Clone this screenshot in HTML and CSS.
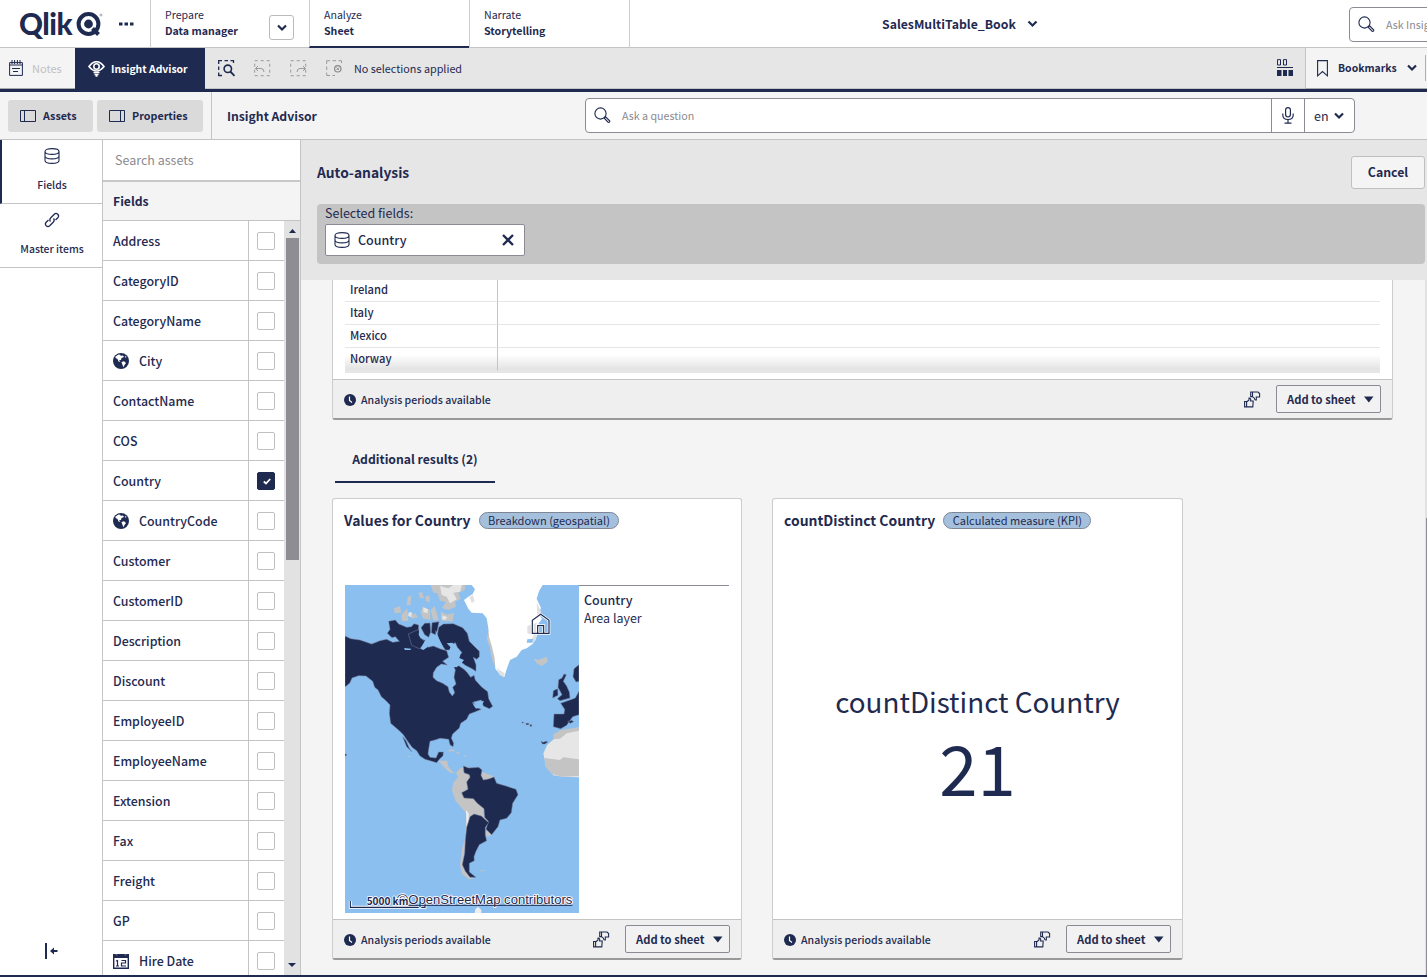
FILE: index.html
```html
<!DOCTYPE html>
<html lang="en">
<head>
<meta charset="utf-8">
<title>SalesMultiTable_Book - Insight Advisor</title>
<link rel="stylesheet" href="styles.css">
</head>
<body>
<svg class="defs" width="0" height="0">
  <symbol id="chev" viewBox="0 0 10 8"><path d="M1 1.5L5 5.5L9 1.5" fill="none" stroke="currentColor" stroke-width="2.2"/></symbol>
  <symbol id="search" viewBox="0 0 18 18"><circle cx="6.500" cy="6.500" r="5.600" fill="none" stroke="currentColor" stroke-width="1.1"/><path d="M10.200 11.200L11.600 9.800L15.800 14Q15.800 15.600 14.300 15.500Z" fill="none" stroke="currentColor" stroke-width="1.1"/></symbol>
  <symbol id="db" viewBox="0 0 16 16"><path d="M1 3.500V12.500C1 16.300 15 16.300 15 12.500V3.500M1 3.500C1 -.3 15 -.3 15 3.500S1 7.300 1 3.500M1 8C1 11.800 15 11.800 15 8" fill="none" stroke="currentColor" stroke-width="1.1"/></symbol>
  <symbol id="globe" viewBox="0 0 16 16"><circle cx="8" cy="8" r="8" fill="#1f2a50"/><path d="M2.500 3.500L5.500 1.500L8 2L7 3L10 2.500L11 4L8.500 5L8 7L6 7.200L7.500 9L5.500 8.500L4.500 6L2.500 5Z" fill="#fff"/><path d="M8.500 9L11 8.300L13 10L11.500 12L10.500 14.200L9.500 12Z" fill="#fff"/><path d="M12 2.500L13.500 4L12.500 5Z" fill="#fff"/></symbol>
  <symbol id="clock" viewBox="0 0 12 12"><circle cx="6" cy="6" r="6" fill="#1f2a50"/><path d="M5.500 2.500V6.500L8 8.500" fill="none" stroke="#fff" stroke-width="1.200"/></symbol>
  <symbol id="thumbs" viewBox="0 0 17 17"><g fill="none" stroke="currentColor" stroke-width="1.100"><path d="M.6 10.500H2.600V15.900H.6ZM2.600 11L5 9V7Q7.200 6.800 6.600 10H9.200L8.800 15.900H2.600"/><path d="M6.700 1H8.500V5.600H6.700ZM8.500 1H14L15.600 2.500V6H12.300V9Q10.600 9.200 10.400 7.200L8.500 5.600"/></g></symbol>
  <symbol id="down" viewBox="0 0 10 7"><path d="M0 .5H9.500L4.800 6.500Z" fill="currentColor"/></symbol>
</svg>
<div class="app">
  <header class="top">
    <div class="brand">
      <span class="brand-name">Qlik</span>
      <svg class="brand-mark" width="27" height="26" viewBox="0 0 27 26"><circle cx="12.500" cy="12" r="9.900" fill="none" stroke="#1f2a50" stroke-width="4"/><circle cx="12.500" cy="12" r="4.400" fill="#1f2a50"/><path d="M16.500 16.500L22.500 22.500" stroke="#1f2a50" stroke-width="4"/><circle cx="25" cy="3" r="1" fill="none" stroke="#777" stroke-width=".6"/></svg>
      <svg class="dots" width="15" height="4" viewBox="0 0 15 4"><path d="M0 .5h3.500v3H0ZM5.500 .5H9v3H5.500ZM11 .5h3.500v3H11Z" fill="#1f2a50"/></svg>
    </div>
    <div class="tab prepare"><div><span>Prepare</span><b>Data manager</b></div><button class="drop"><svg width="10" height="8"><use href="#chev"/></svg></button></div>
    <div class="tab active"><div><span>Analyze</span><b>Sheet</b></div></div>
    <div class="tab"><div><span>Narrate</span><b>Storytelling</b></div></div>
    <div class="book"><span>SalesMultiTable_Book</span><svg width="11" height="8"><use href="#chev"/></svg></div>
    <div class="ask"><svg width="18" height="18"><use href="#search"/></svg><span>Ask Insight Advisor</span></div>
  </header>

  <div class="selbar">
    <div class="notes"><svg width="15" height="17" viewBox="0 0 15 17"><path d="M.6 2.600H13.400V15.400H.6ZM.6 5H13.400M3 0V4M5.600 0V4M8.400 0V4M11 0V4M3 8.500H11M4 11.500H9" fill="none" stroke="#1f2a50"/></svg><span>Notes</span></div>
    <div class="advisor"><svg width="17" height="16" viewBox="0 0 17 16"><path d="M1 5.500Q8.500 -4 16 5.500Q12.500 10 8.500 10T1 5.500Z" fill="none" stroke="#fff" stroke-width="1.700"/><circle cx="8.500" cy="5.500" r="2.700" fill="none" stroke="#fff" stroke-width="1.600"/><path d="M5.500 11.500H11.500M6.500 13.500H10.500M7.500 15H9.500" stroke="#fff" stroke-width="1.300"/></svg><span>Insight Advisor</span></div>
    <div class="tools">
      <svg width="18" height="17" viewBox="0 0 18 17"><path d="M.7 4V.7H4M6.500 .7H10M12.500 .7H15.500V3M.7 6.500V10M.7 12.500V15.500H4" fill="none" stroke="#1f2a50" stroke-width="1.300"/><circle cx="9.800" cy="8.800" r="3.700" fill="none" stroke="#1f2a50" stroke-width="1.600"/><path d="M12.300 11.500L16.500 15.800" stroke="#1f2a50" stroke-width="1.800"/></svg>
      <svg width="18" height="17" viewBox="0 0 18 17"><rect x=".7" y=".7" width="15" height="15" fill="none" stroke="#999" stroke-dasharray="3 3"/><path d="M4 6L1.500 8.500L4 11M1.500 8.500H7Q10 8.500 10 12" fill="none" stroke="#999"/></svg>
      <svg width="18" height="17" viewBox="0 0 18 17"><rect x=".7" y=".7" width="15" height="15" fill="none" stroke="#999" stroke-dasharray="3 3"/><path d="M13 6L15.500 8.500L13 11M15.500 8.500H10Q7 8.500 7 12" fill="none" stroke="#999"/></svg>
      <svg width="18" height="17" viewBox="0 0 18 17"><path d="M.7 4V.7H4M6.500 .7H10M12.500 .7H15.500V3M.7 6.500V10M.7 12.500V15.500H4M6.500 15.500H9" fill="none" stroke="#999"/><circle cx="11.800" cy="8.800" r="3.200" fill="none" stroke="#888" stroke-width="1.200"/><path d="M10.500 7.500L13 10M13 7.500L10.500 10" stroke="#888"/></svg>
    </div>
    <span class="nosel">No selections applied</span>
    <svg class="seltool" width="16" height="17" viewBox="0 0 16 17"><path d="M.5 .6H3.500V6H.5ZM6.500 .6H9.500V6H6.500Z" fill="none" stroke="#1f2a50" stroke-width="1"/><path d="M0 8.500H16" stroke="#1f2a50" stroke-width="1"/><path d="M0 11H4.500V17H0ZM6 11H10V17H6ZM11.500 11H16V17H11.500Z" fill="#1f2a50"/></svg>
    <div class="bookmarks"><svg width="11" height="17" viewBox="0 0 11 17"><path d="M.6 .6H10.400V15.800L5.500 11.500L.6 15.800Z" fill="none" stroke="#1f2a50" stroke-width="1.100"/></svg><span>Bookmarks</span><svg width="10" height="8"><use href="#chev"/></svg><i></i></div>
  </div>

  <div class="subbar">
    <div class="toggles">
      <button class="toggle assets"><svg width="17" height="12" viewBox="0 0 17 12"><path d="M.5 .5H15.500V11.500H.5ZM4.500 .5V11.500" fill="none" stroke="#1f2a50"/></svg>Assets</button>
      <button class="toggle props"><svg width="17" height="12" viewBox="0 0 17 12"><path d="M.5 .5H15.500V11.500H.5ZM11.500 .5V11.500" fill="none" stroke="#1f2a50"/></svg>Properties</button>
    </div>
    <h1>Insight Advisor</h1>
    <div class="question">
      <svg width="18" height="18"><use href="#search"/></svg><span>Ask a question</span>
      <div class="mic"><svg width="12" height="17" viewBox="0 0 12 17"><rect x="3.600" y=".6" width="4.800" height="9.400" rx="2.400" fill="none" stroke="#1f2a50" stroke-width="1.200"/><path d="M.8 6.500V8Q.8 12.500 6 12.500T11.200 8V6.500M6 12.500V16M2.500 16.200H9.500" fill="none" stroke="#1f2a50" stroke-width="1.200"/></svg></div>
      <div class="lang">en<svg width="10" height="8"><use href="#chev"/></svg></div>
    </div>
  </div>

  <div class="body">
    <nav class="rail">
      <div class="rail-item on"><svg width="16" height="16"><use href="#db"/></svg><span>Fields</span></div>
      <div class="rail-item"><svg width="16" height="16" viewBox="0 0 16 16"><g fill="none" stroke="#1f2a50" stroke-width="1.300"><path d="M6.500 9.500Q5 7.500 6.800 5.800L10.300 2.200Q12 .6 13.800 2.200Q15.400 4 13.800 5.700L11.500 8"/><path d="M9.500 6.500Q11 8.500 9.200 10.200L5.700 13.800Q4 15.400 2.200 13.800Q.6 12 2.200 10.300L4.500 8"/></g></svg><span>Master items</span></div>
      <svg class="collapse" width="13" height="16" viewBox="0 0 13 16"><path d="M1 0V16" stroke="#1f2a50" stroke-width="2"/><path d="M5 8L9 4.500V7H12.500V9H9V11.500Z" fill="#1f2a50"/></svg>
    </nav>
    <aside class="panel">
      <div class="find">Search assets</div>
      <h2>Fields</h2>
      <div class="listwrap">
        <ul class="list">
          <li><span>Address</span><i></i></li>
          <li><span>CategoryID</span><i></i></li>
          <li><span>CategoryName</span><i></i></li>
          <li><span><svg width="16" height="16"><use href="#globe"/></svg>City</span><i></i></li>
          <li><span>ContactName</span><i></i></li>
          <li><span>COS</span><i></i></li>
          <li><span>Country</span><i class="checked"><svg width="8" height="7" viewBox="0 0 8 7"><path d="M.8 3.500L3 5.500L7.200 1" fill="none" stroke="#fff" stroke-width="1.800"/></svg></i></li>
          <li><span><svg width="16" height="16"><use href="#globe"/></svg>CountryCode</span><i></i></li>
          <li><span>Customer</span><i></i></li>
          <li><span>CustomerID</span><i></i></li>
          <li><span>Description</span><i></i></li>
          <li><span>Discount</span><i></i></li>
          <li><span>EmployeeID</span><i></i></li>
          <li><span>EmployeeName</span><i></i></li>
          <li><span>Extension</span><i></i></li>
          <li><span>Fax</span><i></i></li>
          <li><span>Freight</span><i></i></li>
          <li><span>GP</span><i></i></li>
          <li><span><svg width="16" height="16" viewBox="0 0 16 16"><path d="M.7 2H15.300V15.300H.7Z" fill="none" stroke="#1f2a50" stroke-width="1.400"/><path d="M0 1H2.500V2.500H4.500V1H11.500V2.500H13.500V1H16V5H0Z" fill="#1f2a50"/><path d="M3 8L4.500 7.500V13M3 13H6M8.500 7.500H12.500V10H8.500V13H13" fill="none" stroke="#1f2a50" stroke-width="1.200"/></svg>Hire Date</span><i></i></li>
        </ul>
        <div class="scroll"><svg width="7" height="4" viewBox="0 0 7 4"><path d="M0 4L3.500 0L7 4Z" fill="#1f2a50"/></svg><div class="thumb"></div><svg class="sd" width="8" height="4" viewBox="0 0 8 4"><path d="M0 0H8L4 4Z" fill="#1f2a50"/></svg></div>
      </div>
    </aside>

    <main class="main">
      <section class="head">
        <div class="headrow"><h3>Auto-analysis</h3><button class="cancel">Cancel</button></div>
        <div class="selected">
          <span>Selected fields:</span>
          <div class="chip"><svg width="16" height="16"><use href="#db"/></svg><b>Country</b><svg width="12" height="12" viewBox="0 0 12 12"><path d="M1 1L11 11M11 1L1 11" stroke="#1f2a50" stroke-width="2.300"/></svg></div>
        </div>
      </section>
      <div class="results">
        <div class="scrollarea">
          <article class="card wide">
            <table class="grid"><tr><td>Ireland</td><td></td></tr><tr><td>Italy</td><td></td></tr><tr><td>Mexico</td><td></td></tr><tr class="fade"><td>Norway</td><td></td></tr></table>
            <footer><svg width="12" height="12"><use href="#clock"/></svg><span>Analysis periods available</span><svg class="th" width="17" height="17"><use href="#thumbs"/></svg><button class="add">Add to sheet<svg width="10" height="7"><use href="#down"/></svg></button></footer>
          </article>
          <div class="more">Additional results (2)</div>
          <div class="cards">
            <article class="card">
              <div class="ctitle"><h4>Values for Country</h4><em>Breakdown (geospatial)</em></div>
              <div class="geo">
                <svg class="map" width="234" height="328" viewBox="15 15 702 984">
                  <rect x="15" y="15" width="702" height="984" fill="#8abff0"/>
                  <g fill="#c4c4c4">
                    <path d="M203 50L214 48 211 76 200 74ZM162 85L180 78 184 98 164 100ZM184 105L202 85 205 122 186 124ZM236 38L246 36 252 55 240 54ZM256 50L268 46 270 66 258 64ZM248 80L270 90 272 120 250 116 242 98ZM272 90L284 78 296 120 280 122ZM302 94L322 104 342 98 338 124 304 122ZM212 104L226 100 234 112 214 116Z"/>
                    <path d="M272 15H376L374 30 355 40 362 56 345 66 348 80 325 90 306 84 318 66 300 62 292 40 280 38Z"/>
                    <path d="M445 155L453 165 456 200 466 210 466 262 455 235 450 205 440 175ZM580 235L595 240 620 230 623 245 605 258 590 250Z"/>
                  </g>
                  <g fill="#e6e6e6">
                    <path d="M300 18L325 25 340 15H366L360 35 340 38 350 58 330 70 320 50 305 45ZM250 82L264 88 262 100 250 96ZM205 98L216 96 214 112 205 108ZM308 106L322 112 315 120 306 117Z"/>
                  </g>
                  <path d="M372 60L385 50 398 42 405 28 395 15H608L597 34 590 56 603 84 594 102 606 116 592 136 590 170 578 192 560 205 545 210 530 230 510 240 500 268 493 291 480 283 466 266 464 235 456 200 447 170 445 145 440 115 428 100 395 98 385 86Z" fill="#fff"/>
                  <path d="M388 52L398 45 404 62 396 70ZM590 68L604 96 592 110ZM562 138L590 128 588 180 576 188 580 165 562 160ZM470 262L478 270 494 280 492 292 478 284Z" fill="#e1e1e1"/>
                  <path d="M562 178L580 176 577 188H560Z" fill="#8abff0"/>
                  <g fill="#1f2a50" stroke="#7d849c" stroke-width="1.500">
                    <path d="M15 168L32 176 60 180 95 192 120 182 140 178 158 187 178 184 166 170 156 173 142 160 150 148 146 124 166 120 176 132 186 136 200 142 214 140 222 131 236 135 235 162 245 178 260 182 256 195 264 202 280 198 302 207 320 212 326 232 308 244 322 255 304 252 290 262 280 278 279 292 290 302 308 310 324 320 328 336 337 348 344 338 338 322 348 312 342 292 346 270 342 262 354 256 372 268 382 278 392 292 402 286 406 300 424 320 443 335 446 356 458 379 448 386 430 378 424 360 400 366 412 384 424 388 404 396 388 402 380 418 362 430 358 444 338 462 334 474 341 490 339 500 330 494 326 478 300 475 285 480 270 484 266 508 264 522 270 532 288 534 296 516 310 516 309 527 298 538 290 548 276 544 255 538 240 528 230 512 216 502 202 482 190 464 178 452 152 430 148 400 150 375 138 362 124 350 114 330 104 322 98 304 78 288 56 287 36 294 30 308 18 319H15Z"/>
                    <path d="M296 142L310 132 340 131 368 143 382 160 388 184 402 198 418 214 418 230 410 238 400 232 408 254 408 274 396 266 376 256 360 244 352 230 366 218 352 202 346 188 334 194 336 210 316 210 300 186 292 164Z"/>
                    <path d="M243 143L254 130 270 129 272 156 266 172 254 164ZM276 128L297 125 292 150 286 164 274 158ZM205 162L236 148 242 174 258 188 238 206 215 196Z"/>
                    <path d="M188 470L198 482 208 505 216 516 200 500Z"/>
                    <path d="M656 299L666 294 672 282 679 284 670 304 680 318 688 336 690 354 660 362 652 356 666 344 654 322ZM640 332L653 326 654 346 638 354ZM717 254L702 266 699 290 708 306 717 304ZM717 334L706 354 690 360 662 370 674 388 672 402 642 402 640 440 662 446 680 436 698 410 717 404Z"/>
                    <path d="M546 426h4v3h-4ZM558 430h8v4h-8ZM570 434h5v5h-5ZM603 484l6 3 10-3 4 2-8 6h-8ZM683 425l12-4 6 4-10 5ZM15 522h4v5h-4Z"/>
                  </g>
                  <g fill="#8abff0"><path d="M335 194L344 206 352 214 364 216 358 234 372 240 364 250 350 262 338 260 326 248 332 232 326 214ZM396 366L408 376 420 366 432 362 424 380 408 386 402 378Z"/><path d="M320 190L338 188 342 198 334 204ZM192 204L214 206 211 210H195ZM241 206L256 180 266 178 262 202 250 210ZM238 150L246 160 243 176 236 164ZM286 150L296 174 304 190 312 208 300 204 290 180Z"/></g>
                  <path d="M655 458L717 442V592L668 590 640 586 618 560 610 520 622 494 645 474Z" fill="#e6e6e6"/>
                  <path d="M640 463L662 450 717 442V452L680 460 660 476 640 478ZM613 534L660 540 670 532 717 538V588L665 590 636 582 618 562Z" fill="#c4c4c4"/>
                  <path d="M322 510L340 508 345 514 328 514ZM345 516L358 518 355 523ZM372 525L381 526 377 531ZM205 528h6v3h-6Z" fill="#c4c4c4"/>
                  <g transform="translate(0 480)">
                    <path d="M296 62L322 62 324 78 336 94 348 98 362 84 380 80 460 108 450 122 430 220 446 236 444 250 436 262 456 282 445 290 432 282 420 236 390 230 386 280 378 300 374 340 370 375 384 402 400 416 386 418 366 402 360 375 366 325 374 300 380 222 362 200 346 182 336 150 340 128 354 112 348 98 330 98 312 82Z" fill="#c4c4c4"/>
                    <path d="M418 392L434 390 432 394H420Z" fill="#c4c4c4"/>
                    <path d="M378 210L386 220 386 250 380 270Z" fill="#eee"/>
                    <g fill="#1f2a50" stroke="#7d849c" stroke-width="1.500">
                      <path d="M370 78L386 84 416 82 426 90 423 106 430 120 446 117 462 111 470 130 498 138 528 148 534 164 518 190 514 218 500 235 480 240 474 260 455 284 438 268 445 244 434 232 432 206 412 190 400 176 372 174 365 158 384 148 380 126 390 112 388 104 372 98Z"/>
                      <path d="M390 230L402 222 424 228 446 248 436 262 436 286 440 302 418 314 408 334 402 350 403 362 388 370 388 396 408 412 390 412 376 394 367 374 374 340 376 300 380 262Z"/>
                    </g>
                    <path d="M404 519L406 508 414 500 424 510V519Z" fill="#eee"/>
                  </g>
                  <path d="M577 160V121L602 103 627 121V160ZM593 160V137H611V160" fill="none" stroke="#fff" stroke-width="8"/>
                  <path d="M577 160V121L602 103 627 121V160ZM593 160V137H611V160" fill="none" stroke="#1f2a50" stroke-width="3.500"/>
                  <path d="M31 963V982H255V963" fill="none" stroke="#fff" stroke-width="9"/>
                  <path d="M31 963V982H255V963" fill="none" stroke="#1f2a50" stroke-width="3.500"/>
                  <g class="maptext">
                    <text class="osm" x="170" y="972" textLength="34" lengthAdjust="spacingAndGlyphs">©</text>
                    <text class="osm" x="205" y="972" textLength="492" lengthAdjust="spacingAndGlyphs">OpenStreetMap contributors</text>
                    <path d="M205 976H697" stroke="#1f2a50" stroke-width="3"/>
                    <text class="km" x="80" y="975" textLength="125" lengthAdjust="spacingAndGlyphs">5000 km</text>
                  </g>
                </svg>
                <div class="legend"><b>Country</b><span>Area layer</span></div>
              </div>
              <footer><svg width="12" height="12"><use href="#clock"/></svg><span>Analysis periods available</span><svg class="th" width="17" height="17"><use href="#thumbs"/></svg><button class="add">Add to sheet<svg width="10" height="7"><use href="#down"/></svg></button></footer>
            </article>
            <article class="card kpi">
              <div class="ctitle"><h4>countDistinct Country</h4><em>Calculated measure (KPI)</em></div>
              <div class="measure"><span>countDistinct Country</span><strong>21</strong></div>
              <footer><svg width="12" height="12"><use href="#clock"/></svg><span>Analysis periods available</span><svg class="th" width="17" height="17"><use href="#thumbs"/></svg><button class="add">Add to sheet<svg width="10" height="7"><use href="#down"/></svg></button></footer>
            </article>
          </div>
        </div>
        <div class="mainscroll"><div></div></div>
      </div>
    </main>
  </div>
</div>
</body>
</html>
```
FILE: styles.css
```css
* { box-sizing: border-box; }
body { margin: 0; overflow: hidden; color: #1f2a50; font: 500 12.5px/18px "Noto Sans CJK JP", "Noto Sans CJK SC", sans-serif; }
h1, h2, h3, h4 { margin: 0; font-size: 13px; font-weight: 700; }
button { font: inherit; color: inherit; padding: 0; }
svg { display: block; flex: none; }
span, b, em { white-space: nowrap; }
.defs { position: absolute; }
.app { width: 1427px; height: 977px; display: flex; flex-direction: column; background: #fff; border-bottom: 2px solid #1f2a50; overflow: hidden; }

/* Header */
.top { display: flex; height: 48px; flex: none; border-bottom: 1px solid #c4c4c4; }
.top > div { flex: none; }
.brand { width: 150px; display: flex; padding: 11px 0 0 19px; }
.brand-name { width: 57px; font: 900 29.5px/25px Lato, sans-serif; letter-spacing: -.5px; }
.brand-mark { margin-top: 1px; }
.dots { margin: 11px 0 0 16px; }
.tab { width: 160px; height: 48px; border-left: 1px solid #ccc; padding: 7px 0 0 14px; font-size: 10.6px; line-height: 16px; display: flex; justify-content: space-between; }
.tab.prepare { width: 159px; padding-right: 15px; }
.tab span, .tab b { display: block; }
.tab span { font-weight: 400; }
.tab.active { border-bottom: 2px solid #1f2a50; }
.tab:nth-child(4) { border-right: 1px solid #ccc; width: 161px; }
.drop { width: 25px; height: 25px; margin-top: 8px; border: 1px solid #bbb; border-radius: 3px; background: #fff; display: flex; align-items: center; justify-content: center; }
.book { padding-left: 252px; width: 719px; display: flex; align-items: center; gap: 11px; font-weight: 700; font-size: 12.25px; }
.ask { width: 90px; height: 35px; margin-top: 7px; border: 1px solid #8c8a94; border-radius: 4px; display: flex; align-items: center; gap: 10px; padding-left: 8px; font-size: 10.7px; font-weight: 400; }
.ask span, .question span { color: #8a8a8f; }

/* Selections bar */
.selbar { display: flex; align-items: center; height: 44px; flex: none; background: #e6e6e6; border-bottom: 3px solid #1f2a50; box-shadow: inset 0 -1px #c4c4c4; }
.notes { width: 75px; height: 41px; background: #f4f4f4; border-bottom: 1px solid #aaa; display: flex; align-items: center; gap: 8px; padding-left: 9px; font-size: 11px; font-weight: 400; color: #c0c0c4; }
.advisor { width: 130px; height: 41px; background: #1f2a50; color: #fff; display: flex; align-items: center; gap: 6px; padding-left: 13px; font-size: 10.4px; font-weight: 700; }
.advisor span { padding-top: 1px; }
.tools { display: flex; gap: 18px; padding-left: 13px; margin-top: -1px; }
.nosel { padding-left: 10px; font-size: 10.8px; font-weight: 400; margin-top: -2px; }
.seltool { margin-left: auto; margin-top: -2px; }
.bookmarks { width: 122px; height: 41px; margin-left: 12px; border-left: 1px solid #c4c4c4; background: #f4f4f4; border-bottom: 1px solid #aaa; display: flex; align-items: center; gap: 10px; padding-left: 11px; font-size: 10.45px; font-weight: 700; }
.bookmarks i { width: 1px; height: 26px; margin-left: -2px; background: #b0b0b4; }

/* Toolbar */
.subbar { height: 48px; flex: none; background: #f4f4f4; border-bottom: 1px solid #c4c4c4; display: flex; align-items: center; }
.toggles { width: 212px; height: 47px; border-right: 1px solid #c4c4c4; display: flex; gap: 4px; padding: 8px 0 0 8px; }
.toggle { height: 32px; border: 0; border-radius: 3px; background: #dadada; display: flex; align-items: center; gap: 6px; padding-left: 12px; font-size: 10.75px; font-weight: 700; }
.assets { width: 85px; }
.props { width: 106px; }
.subbar h1 { width: 373px; padding-left: 15px; font-size: 12.2px; }
.question { width: 770px; height: 35px; border: 1px solid #8c8a94; border-radius: 4px; background: #fff; display: flex; align-items: center; padding-left: 8px; gap: 10px; font-size: 10.7px; font-weight: 400; }
.mic { width: 33px; height: 33px; margin-left: auto; margin-right: -10px; border-left: 1px solid #8c8a94; display: flex; align-items: center; justify-content: center; }
.lang { width: 50px; height: 33px; border-left: 1px solid #8c8a94; display: flex; align-items: center; gap: 5px; padding-left: 9px; font-size: 12.5px; }

/* Left rail and assets */
.body { display: flex; flex: 1; min-height: 0; }
.rail { width: 102px; display: flex; flex-direction: column; }
.rail-item { height: 64px; border-bottom: 1px solid #c4c4c4; padding: 8px 0 0 2px; display: flex; flex-direction: column; align-items: center; gap: 12px; font-size: 10.4px; }
.rail-item.on { border-left: 2px solid #1f2a50; padding-left: 0; }
.collapse { margin: auto 0 16px 45px; }
.panel { width: 199px; border-left: 1px solid #c4c4c4; border-right: 1px solid #c4c4c4; display: flex; flex-direction: column; }
.find { height: 42px; flex: none; border-bottom: 2px solid #c8c8c8; padding: 11px 12px; color: #8a8a8f; font-weight: 400; }
.panel h2 { height: 39px; flex: none; background: #f4f4f4; border-bottom: 1px solid #c4c4c4; padding: 10px; font-size: 12.2px; }
.listwrap { display: flex; flex: 1; min-height: 0; overflow: hidden; }
.list { margin: 0; padding: 0; width: 181px; list-style: none; font-size: 12.4px; }
.list li { height: 40px; border-bottom: 1px solid #c4c4c4; display: flex; }
.list span { width: 145px; padding-left: 10px; display: flex; align-items: center; gap: 10px; padding-top: 1px; }
.list i { flex: 1; border-left: 1px solid #c4c4c4; display: flex; align-items: center; padding: 1px 0 0 9px; }
.list i::before { content: ""; width: 16px; height: 16px; margin-left: -1px; border: 1px solid #c0c0c0; border-radius: 2px; }
.list i { padding-left: 10px; }
.list i::before { margin-left: -1px; flex: none; }
.list i { padding-left: 9px; }
.list .checked::before { background: #1f2a50; border-color: #1f2a50; }
.list .checked svg { margin-left: -12px; }
.scroll { width: 16px; background: #e2e2e2; display: flex; flex-direction: column; padding: 8px 0 8px 2px; }
.scroll > svg { margin-left: 3px; }
.thumb { width: 13px; height: 322px; margin-top: 5px; background: #8f8d94; }
.scroll .sd { margin-top: auto; margin-left: 2px; }

/* Main */
.main { flex: 1; min-width: 0; background: #f4f4f4; display: flex; flex-direction: column; }
.head { height: 140px; flex: none; background: #e6e6e6; padding: 16px 2px 0 16px; }
.headrow { display: flex; justify-content: space-between; align-items: center; height: 32px; }
.head h3 { font-size: 13.8px; }
.cancel { width: 74px; height: 33px; border: 1px solid #c0c0c0; border-radius: 3px; background: #f4f4f4; font-size: 12.3px; font-weight: 700; }
.selected { height: 60px; margin-top: 16px; padding: 0 8px; background: #c4c4c4; border-radius: 4px; font-weight: 400; display: flex; flex-direction: column; gap: 2px; }
.chip { width: 200px; height: 32px; border: 1px solid #8c8a94; border-radius: 2px; background: #fff; display: flex; align-items: center; padding: 0 10px 0 8px; gap: 8px; }
.chip b { flex: 1; font-weight: 500; }
.results { flex: 1; min-height: 0; display: flex; }
.scrollarea { flex: 1; padding-left: 31px; overflow: hidden; }
.mainscroll { width: 2px; background: #e2e2e2; padding: 238px 0 0 1px; }
.mainscroll div { height: 457px; background: #8f8d94; }
.card { width: 410px; height: 462px; background: #fff; border: 1px solid #ccc; border-bottom: 2px solid #999; border-radius: 3px; display: flex; flex-direction: column; }
.card.kpi { width: 411px; }
.card.wide { width: 1061px; height: 140px; border-top: 0; border-radius: 0 0 3px 3px; }
.grid { width: 1035px; margin: -1px 0 7px 12px; border-collapse: separate; border-spacing: 0; font-size: 11.2px; line-height: 20px; }
.grid td { height: 23px; padding: 0 0 2px 5px; border-bottom: 1px solid #e6e6e6; }
.grid td:first-child { width: 153px; border-right: 1px solid #c4c4c4; }
.grid .fade td { background: linear-gradient(#fff 30%, #e2e2e2); box-shadow: 0 2px #e6e6e6; }
.card footer { height: 39px; margin-top: auto; flex: none; border-top: 1px solid #c4c4c4; background: #efefef; display: flex; align-items: center; padding: 1px 11px 0; font-size: 10.55px; font-weight: 500; }
.card footer span { margin-left: 5px; }
.th { margin: 0 15px 0 auto; }
.add { width: 105px; height: 28px; margin-top: -2px; border: 1px solid #8c8a94; border-radius: 2px; background: #f2f2f2; display: flex; align-items: center; gap: 9px; padding-left: 10px; font-size: 11.2px; font-weight: 700; white-space: nowrap; }
.add svg { margin-top: 2px; }
.more { width: 160px; height: 40px; margin: 23px 0 15px 3px; padding-top: 7px; border-bottom: 2px solid #1f2a50; text-align: center; font-size: 12.2px; font-weight: 700; }
.cards { display: flex; gap: 30px; }
.ctitle { display: flex; align-items: center; height: 18px; margin: 12px 0 0 11px; gap: 8px; }
.ctitle h4 { font-size: 13.95px; white-space: nowrap; }
.ctitle em { height: 17px; border: 1px solid #7f8794; border-radius: 9px; background: #a5c0dc; padding: 0 8.5px; font: 400 11.05px/15px "Noto Sans CJK JP", sans-serif; }
.geo { display: flex; margin: 56px 12px 0; }
.legend { flex: 1; border-top: 1px solid #8c8a94; padding: 5px; }
.legend b, .legend span { display: block; font-weight: 500; }
.legend span { font-weight: 400; }
.maptext { paint-order: stroke; fill: #1f2a50; stroke: #fff; stroke-width: 5px; stroke-linejoin: round; }
.km { font: 700 32px "Noto Sans CJK JP", sans-serif; }
.osm { font: 400 38px "Liberation Sans", sans-serif; }
.measure { flex: 1; display: flex; flex-direction: column; align-items: center; font-weight: 400; padding-top: 147px; }
.measure span { font-size: 27.8px; line-height: 50px; }
.measure strong { font-size: 69px; line-height: 80px; font-weight: 400; }
```
